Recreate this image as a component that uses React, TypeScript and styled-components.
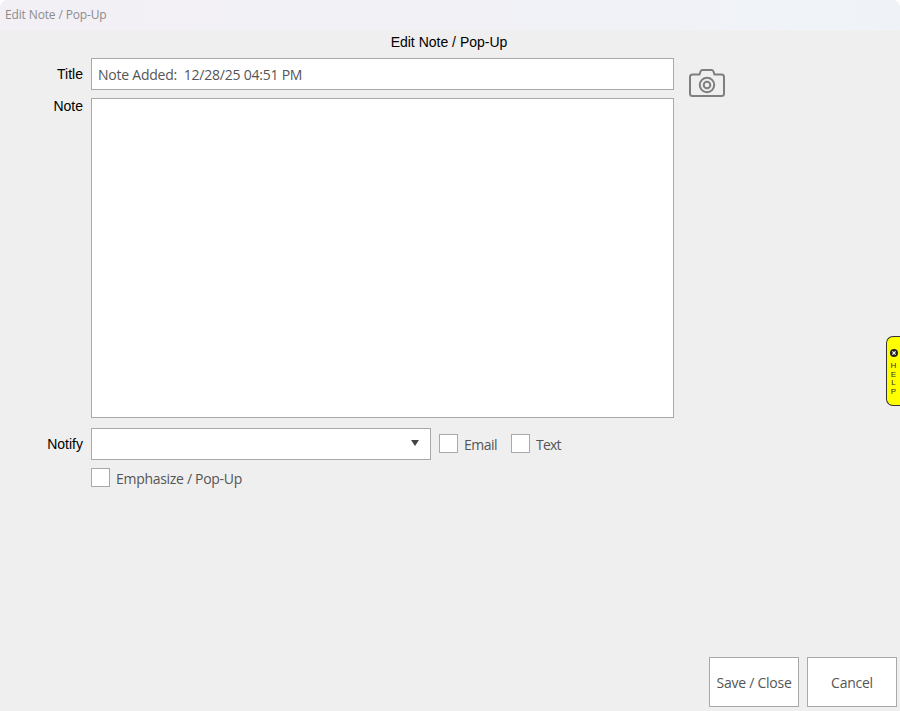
import React from "react";
import styled, { createGlobalStyle } from "styled-components";

const Global = createGlobalStyle`
  html, body { margin: 0; padding: 0; height: 100%; background: #fff; }
  #root { height: 100%; }
  * { box-sizing: border-box; }
`;

const Win = styled.div`
  position: relative;
  width: 900px;
  height: 711px;
  background: #efefef;
  border-radius: 8px 8px 0 0;
  overflow: hidden;
  display: flex;
  flex-direction: column;
`;

const TitleBar = styled.div`
  height: 30px;
  flex: none;
  display: flex;
  align-items: center;
  padding: 0 0 1px 5px;
  background: linear-gradient(90deg, #f3f0f5 0%, #f1f1f6 50%, #eff3f7 100%);
  font: 12px "Open Sans", sans-serif;
  letter-spacing: -0.14px;
  color: #8b8b8b;
`;

const Body = styled.div`
  flex: 1;
  display: flex;
  flex-direction: column;
  padding: 4px 3px 4px 0;
`;

const Heading = styled.div`
  height: 24px;
  width: 898px;
  text-align: center;
  font: 14px/17px "Liberation Sans", Arial, sans-serif;
  color: #000;
`;

const Form = styled.div`
  display: grid;
  grid-template-columns: 83px 583px 1fr;
  column-gap: 8px;
  grid-template-rows: 32px 320px 32px 19px;
  row-gap: 8px;
`;

const Label = styled.div<{ $top: number }>`
  text-align: right;
  padding-top: ${(p) => p.$top}px;
  font: 14px/17px "Liberation Sans", Arial, sans-serif;
  color: #000;
`;

const Field = styled.div`
  background: #fff;
  border: 1px solid #a9a9a9;
  display: flex;
  align-items: center;
  padding-left: 6px;
  font: 14px "Open Sans", sans-serif;
  letter-spacing: -0.23px;
  color: #555;
  white-space: pre;
`;

const CameraCell = styled.div`
  padding: 11px 0 0 7px;
  color: #7f7f7f;
  line-height: 0;
`;

const NotifyRow = styled.div`
  grid-column: 2 / 4;
  display: flex;
  align-items: center;
  margin-top: 2px;
  height: 32px;
`;

const Select = styled.div`
  width: 340px;
  height: 32px;
  flex: none;
  background: #fff;
  border: 1px solid #a9a9a9;
  display: flex;
  align-items: center;
  justify-content: flex-end;
  padding: 0 11px 2px 0;
`;

const Arrow = styled.div`
  width: 0;
  height: 0;
  border-left: 4px solid transparent;
  border-right: 4px solid transparent;
  border-top: 6px solid #444;
`;

const Box = styled.div`
  width: 19px;
  height: 19px;
  flex: none;
  background: #fff;
  border: 1px solid #a9a9a9;
`;

const Check = styled.div<{ $left: number }>`
  display: flex;
  align-items: flex-start;
  gap: 6px;
  margin-left: ${(p) => p.$left}px;
  font: 14px/19px "Open Sans", sans-serif;
  color: #555;
`;

const CheckText = styled.span<{ $drop: number; $spacing: number }>`
  padding-top: ${(p) => p.$drop}px;
  letter-spacing: ${(p) => p.$spacing}px;
`;

const EmphRow = styled.div`
  grid-column: 2 / 4;
  display: flex;
  margin-top: 2px;
`;

const Footer = styled.div`
  margin-top: auto;
  display: flex;
  justify-content: flex-end;
  gap: 8px;
`;

const Btn = styled.div`
  width: 90px;
  height: 50px;
  background: #fff;
  border: 1px solid #a9a9a9;
  display: flex;
  align-items: center;
  justify-content: center;
  font: 14px "Open Sans", sans-serif;
  letter-spacing: -0.25px;
  color: #555;
`;

const Help = styled.div`
  position: absolute;
  right: 0;
  top: 336px;
  width: 14px;
  height: 70px;
  background: #ffff00;
  border: 1px solid #333;
  border-right: none;
  border-radius: 7px 0 0 7px;
  display: flex;
  flex-direction: column;
  align-items: center;
  padding-top: 12px;
`;

const HelpClose = styled.div`
  line-height: 0;
  margin-bottom: 5px;
`;

const HelpText = styled.div`
  font: 8px/8.5px "Liberation Sans", Arial, sans-serif;
  color: #333;
  text-align: center;
  width: 8px;
  word-break: break-all;
`;

const Camera = () => (
  <svg width="36" height="28" viewBox="0 0 36 28" fill="none" stroke="currentColor" strokeWidth="2">
    <path d="M3.5 5.5H10.5L11.5 2.5Q12 1 13.5 1H22.5Q24 1 24.5 2.5L25.5 5.5H32.5Q35 5.5 35 8V24.5Q35 27 32.5 27H3.5Q1 27 1 24.5V8Q1 5.5 3.5 5.5Z" />
    <circle cx="18" cy="16" r="7.2" />
    <circle cx="18" cy="16" r="3.3" />
  </svg>
);

export default function App() {
  return (
    <Win>
      <Global />
      <TitleBar>Edit Note / Pop-Up</TitleBar>
      <Body>
        <Heading>Edit Note / Pop-Up</Heading>
        <Form>
          <Label $top={8}>Title</Label>
          <Field>Note Added:  12/28/25 04:51 PM</Field>
          <CameraCell>
            <Camera />
          </CameraCell>
          <Label $top={0}>Note</Label>
          <Field />
          <div />
          <Label $top={10}>Notify</Label>
          <NotifyRow>
            <Select>
              <Arrow />
            </Select>
            <Check $left={8}>
              <Box />
              <CheckText $drop={1} $spacing={-0.5}>Email</CheckText>
            </Check>
            <Check $left={14}>
              <Box />
              <CheckText $drop={1} $spacing={-0.8}>Text</CheckText>
            </Check>
          </NotifyRow>
          <div />
          <EmphRow>
            <Check $left={0}>
              <Box />
              <CheckText $drop={1} $spacing={-0.3}>Emphasize / Pop-Up</CheckText>
            </Check>
          </EmphRow>
        </Form>
        <Footer>
          <Btn>Save / Close</Btn>
          <Btn>Cancel</Btn>
        </Footer>
      </Body>
      <Help>
        <HelpClose>
          <svg width="8" height="8" viewBox="0 0 8 8">
            <circle cx="4" cy="4" r="4" fill="#222" />
            <path d="M2.4 2.4L5.6 5.6M5.6 2.4L2.4 5.6" stroke="#fff" strokeWidth="1.2" />
          </svg>
        </HelpClose>
        <HelpText>HELP</HelpText>
      </Help>
    </Win>
  );
}
